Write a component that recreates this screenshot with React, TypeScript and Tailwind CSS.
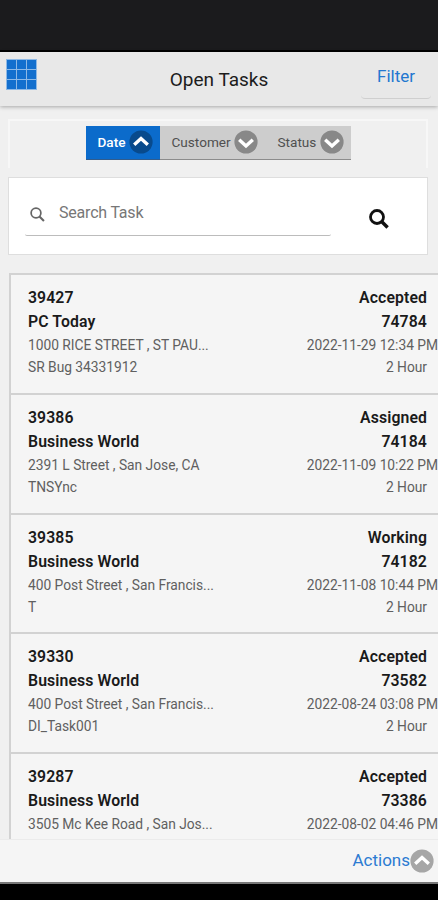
import clsx from "clsx";

const sorts = [
  { label: "Date", active: true, width: "w-[74px] pl-3 pr-[7px]" },
  { label: "Customer", active: false, width: "w-[104px] pl-3 pr-[6px]" },
  { label: "Status", active: false, width: "w-[87px] pl-[14px] pr-[7px]" },
];

const tasks = [
  { id: "39427", customer: "PC Today", address: "1000 RICE STREET , ST PAU...", note: "SR Bug 34331912", status: "Accepted", ref: "74784", date: "2022-11-29 12:34 PM" },
  { id: "39386", customer: "Business World", address: "2391 L Street , San Jose, CA", note: "TNSYnc", status: "Assigned", ref: "74184", date: "2022-11-09 10:22 PM" },
  { id: "39385", customer: "Business World", address: "400 Post Street , San Francis...", note: "T", status: "Working", ref: "74182", date: "2022-11-08 10:44 PM" },
  { id: "39330", customer: "Business World", address: "400 Post Street , San Francis...", note: "DI_Task001", status: "Accepted", ref: "73582", date: "2022-08-24 03:08 PM" },
  { id: "39287", customer: "Business World", address: "3505 Mc Kee Road , San Jos...", note: "Task", status: "Accepted", ref: "73386", date: "2022-08-02 04:46 PM" },
];

function Chevron({ up, fill }: { up?: boolean; fill: string }) {
  return (
    <svg viewBox="0 0 24 24" className="size-6 shrink-0">
      <circle cx="12" cy="12" r="11.6" fill={fill} />
      <path
        d={up ? "M5.2 14.8 12 8.6l6.8 6.2" : "M5.2 9.8 12 16l6.8-6.2"}
        fill="none"
        stroke="#fff"
        strokeWidth="3.4"
      />
    </svg>
  );
}

function SearchIcon({ className, stroke }: { className: string; stroke: number }) {
  return (
    <svg viewBox="0 0 20 20" className={className} fill="none" stroke="currentColor" strokeWidth={stroke}>
      <circle cx="8" cy="8" r="6.5" />
      <path d="m12.6 12.6 6 6" strokeWidth={stroke * 1.25} />
    </svg>
  );
}

function TaskRow({ task }: { task: (typeof tasks)[number] }) {
  return (
    <div className="flex h-[119.75px] shrink-0 justify-between border-t-2 border-[#d2d2d2] pt-[11px] pl-[17px] text-[13.8px] leading-[22px] tracking-[-0.02px] text-[#606060]">
      <div className="whitespace-nowrap">
        <div className="text-[15.8px] leading-6 font-semibold tracking-[0.1px] text-[#1a1a1a]">{task.id}</div>
        <div className="text-[15.8px] leading-6 font-semibold tracking-[0.1px] text-[#1a1a1a]">{task.customer}</div>
        <div>{task.address}</div>
        <div>{task.note}</div>
      </div>
      <div className="flex flex-col items-end whitespace-nowrap">
        <div className="pr-[11px] text-[15.8px] leading-6 font-semibold tracking-[0.1px] text-[#1a1a1a]">{task.status}</div>
        <div className="pr-[11px] text-[15.8px] leading-6 font-semibold tracking-[0.1px] text-[#1a1a1a]">{task.ref}</div>
        <div>{task.date}</div>
        <div className="pr-[11px]">2 Hour</div>
      </div>
    </div>
  );
}

export default function App() {
  return (
    <div className="flex h-[900px] w-[438px] flex-col overflow-hidden bg-[#f0f0f0] font-['Roboto',sans-serif]">
      <div className="h-[52px] shrink-0 border-b-2 border-black bg-[#1b1b1d]" />

      <header className="flex h-[54px] shrink-0 justify-between bg-[#e8e8e8] shadow-[0_1px_4px_rgba(0,0,0,0.3)]">
        <div className="w-[100px] pt-[7px] pl-[6px]">
          <div className="grid size-[31px] grid-cols-3 gap-px bg-[#8db9e6] p-px">
            {Array.from({ length: 9 }, (_, i) => (
              <div key={i} className="bg-[#126fce]" />
            ))}
          </div>
        </div>
        <h1 className="pt-[14px] text-[19px] leading-[27px] text-[#1c1c1c]">Open Tasks</h1>
        <div className="w-[100px] pt-1 pl-[23px]">
          <button className="h-[43px] w-[70px] rounded-sm border-b border-[#cfcfcf] text-[17px] text-[#2377d0]">
            Filter
          </button>
        </div>
      </header>

      <div className="mt-[13px] ml-2 flex h-[49px] w-[420px] shrink-0 items-start justify-center border-2 border-b-0 border-[#f7f7f7] pt-[5px]">
        <div className="flex h-[34px]">
          {sorts.map((sort) => (
            <div
              key={sort.label}
              className={clsx(
                "flex items-center justify-between border-b pb-px text-[13.6px]",
                sort.width,
                sort.active ? "border-[#315c8c] bg-[#0b6bcb] font-medium text-white" : "border-[#8c8c8c] bg-[#cdcdcd] text-[#505050]"
              )}
            >
              {sort.label}
              <Chevron up={sort.active} fill={sort.active ? "#084a8c" : "#888"} />
            </div>
          ))}
        </div>
      </div>

      <div className="mt-[9px] ml-2 flex h-[78px] w-[420px] shrink-0 border border-[#dedede] bg-white pl-4">
        <div className="mt-4 flex h-[42px] w-[306px] items-center rounded-xs border-b border-[#bcbcbc] pb-[3px] pl-[5px] text-[#666]">
          <SearchIcon className="mt-[3px] size-[15px]" stroke={2.3} />
          <span className="ml-[14px] text-base tracking-[-0.2px] text-[#777]">Search Task</span>
        </div>
        <SearchIcon className="mt-[31px] ml-[38px] size-[20px] text-[#111]" stroke={2.8} />
      </div>

      <main className="mt-[18px] ml-[9px] flex min-h-0 flex-1 flex-col overflow-hidden border-l-2 border-[#d2d2d2] bg-[#f5f5f5]">
        {tasks.map((task) => (
          <TaskRow key={task.id} task={task} />
        ))}
      </main>

      <footer className="flex h-[45px] shrink-0 items-center justify-end border-t border-b-2 border-t-[#ebebeb] border-b-[#777] bg-[#f5f5f5] pr-1 text-[17px] text-[#2c7bd2]">
        Actions
        <Chevron up fill="#a6a6a6" />
      </footer>
      <div className="h-4 shrink-0 bg-black" />
    </div>
  );
}
